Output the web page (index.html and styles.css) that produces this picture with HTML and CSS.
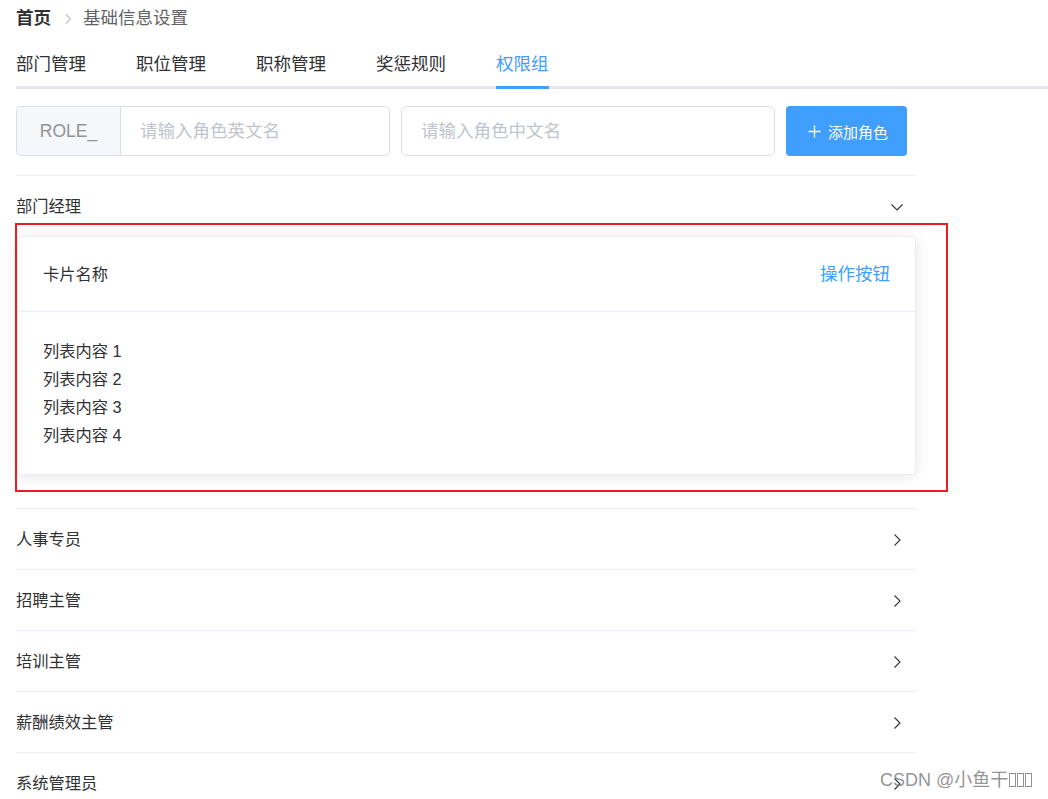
FILE: index.html
```html
<!DOCTYPE html>
<html lang="zh-CN">
<head>
<meta charset="utf-8">
<title>权限组</title>
<link rel="stylesheet" href="styles.css">
</head>
<body>
<div class="page">
  <div class="breadcrumb">
    <span class="crumb-home">首页</span>
    <svg class="crumb-sep" width="10" height="12" viewBox="0 0 10 12"><path d="M3 1.5 L7.5 6 L3 10.5" fill="none" stroke="#C0C4CC" stroke-width="1.3"/></svg>
    <span class="crumb-current">基础信息设置</span>
  </div>

  <div class="tabs">
    <div class="tab"><span class="tab-label">部门管理</span></div>
    <div class="tab"><span class="tab-label">职位管理</span></div>
    <div class="tab"><span class="tab-label">职称管理</span></div>
    <div class="tab"><span class="tab-label">奖惩规则</span></div>
    <div class="tab active"><span class="tab-label">权限组</span></div>
  </div>

  <div class="content">
    <div class="form-row">
      <div class="input-group">
        <div class="prepend">ROLE_</div>
        <input class="input inner" placeholder="请输入角色英文名">
      </div>
      <input class="input solo" placeholder="请输入角色中文名">
      <button class="btn-primary">
        <svg width="15" height="15" viewBox="0 0 15 15"><path d="M7.5 1.5 V13.5 M1.5 7.5 H13.5" stroke="#fff" stroke-width="1.3" fill="none"/></svg>
        <span>添加角色</span>
      </button>
    </div>

    <div class="collapse">
      <div class="c-item open">
        <div class="c-header">
          <span>部门经理</span>
          <svg class="arrow" width="14" height="14" viewBox="0 0 14 14"><path d="M1.5 4.5 L7 10 L12.5 4.5" fill="none" stroke="#303133" stroke-width="1.1"/></svg>
        </div>
        <div class="c-content">
          <div class="card">
            <div class="card-header">
              <span>卡片名称</span>
              <span class="text-btn">操作按钮</span>
            </div>
            <div class="card-body">
              <div class="item">列表内容 1</div>
              <div class="item">列表内容 2</div>
              <div class="item">列表内容 3</div>
              <div class="item">列表内容 4</div>
            </div>
          </div>
        </div>
      </div>
      <div class="c-item">
        <div class="c-header"><span>人事专员</span>
          <svg class="arrow" width="14" height="14" viewBox="0 0 14 14"><path d="M4.5 1.5 L10 7 L4.5 12.5" fill="none" stroke="#303133" stroke-width="1.1"/></svg></div>
      </div>
      <div class="c-item">
        <div class="c-header"><span>招聘主管</span>
          <svg class="arrow" width="14" height="14" viewBox="0 0 14 14"><path d="M4.5 1.5 L10 7 L4.5 12.5" fill="none" stroke="#303133" stroke-width="1.1"/></svg></div>
      </div>
      <div class="c-item">
        <div class="c-header"><span>培训主管</span>
          <svg class="arrow" width="14" height="14" viewBox="0 0 14 14"><path d="M4.5 1.5 L10 7 L4.5 12.5" fill="none" stroke="#303133" stroke-width="1.1"/></svg></div>
      </div>
      <div class="c-item">
        <div class="c-header"><span>薪酬绩效主管</span>
          <svg class="arrow" width="14" height="14" viewBox="0 0 14 14"><path d="M4.5 1.5 L10 7 L4.5 12.5" fill="none" stroke="#303133" stroke-width="1.1"/></svg></div>
      </div>
      <div class="c-item">
        <div class="c-header"><span>系统管理员</span>
          <svg class="arrow" width="14" height="14" viewBox="0 0 14 14"><path d="M4.5 1.5 L10 7 L4.5 12.5" fill="none" stroke="#303133" stroke-width="1.1"/></svg></div>
      </div>
    </div>
  </div>
</div>

<div class="annotation"></div>
<div class="watermark">CSDN @小鱼干<span class="tofu"></span><span class="tofu"></span><span class="tofu"></span></div>
</body>
</html>
```

FILE: styles.css
```css
* { box-sizing: border-box; }
html, body { margin: 0; padding: 0; background: #fff; }
body {
  font-family: "Liberation Sans", "Noto Sans CJK SC", sans-serif;
  color: #303133;
  width: 1048px;
  height: 799px;
  overflow: hidden;
  position: relative;
}
.page { padding-left: 16px; }

.breadcrumb {
  height: 37px;
  display: flex;
  align-items: center;
  font-size: 17.5px;
  line-height: 1;
}
.crumb-home { font-weight: 700; color: #303133; }
.crumb-sep { margin: 0 10px 0 12px; }
.crumb-current { color: #606266; }

.tabs {
  margin-top: 1px;
  height: 51px;
  display: flex;
  border-bottom: 3px solid #E4E7ED;
}
.tab {
  padding: 0 25px;
  font-size: 17.5px;
  line-height: 53px;
  color: #303133;
  height: 48px;
}
.tab:first-child { padding-left: 0; }
.tab:last-child { padding-right: 0; }
.tab-label {
  display: block;
  position: relative;
  height: 48px;
}
.tab.active { color: #409EFF; }
.tab.active .tab-label::after {
  content: "";
  position: absolute;
  left: 0; right: 0; bottom: -3px;
  height: 3px;
  background: #409EFF;
}

.content { width: 900px; }

.form-row {
  margin-top: 17px;
  display: flex;
  align-items: center;
  height: 50px;
}
.input-group {
  display: flex;
  width: 374px;
  height: 50px;
  margin-right: 11px;
}
.prepend {
  width: 104px;
  flex: none;
  background: #F5F7FA;
  border: 1px solid #DCDFE6;
  border-right: none;
  border-radius: 5px 0 0 5px;
  color: #909399;
  font-size: 17.5px;
  display: flex;
  align-items: center;
  justify-content: center;
}
.input {
  height: 50px;
  border: 1px solid #DCDFE6;
  border-radius: 5px;
  padding: 0 19px;
  font-size: 17.5px;
  font-family: inherit;
  color: #606266;
  outline: none;
  background: #fff;
}
.input::placeholder { color: #C0C4CC; }
.input.inner { flex: 1; min-width: 0; border-radius: 0 5px 5px 0; }
.input.solo { width: 374px; margin-right: 11px; }
.btn-primary {
  width: 121px;
  height: 50px;
  border: none;
  border-radius: 4px;
  background: #409EFF;
  color: #fff;
  font-family: inherit;
  font-size: 15px;
  display: flex;
  align-items: center;
  justify-content: center;
  gap: 6px;
  padding: 0 0 0 2px;
}

.collapse {
  margin-top: 19px;
  border-top: 1px solid #EBEEF5;
}
.c-item { border-bottom: 1px solid #EBEEF5; }
.c-header {
  height: 60px;
  display: flex;
  align-items: center;
  justify-content: space-between;
  font-size: 16.25px;
  font-weight: 400;
  color: #303133;
  padding-right: 12px;
  padding-bottom: 3px;
}
.arrow { margin-top: 4px; }
.c-content { padding-bottom: 33px; padding-left: 1px; }

.card {
  border: 1px solid #EBEEF5;
  border-radius: 5px;
  box-shadow: 0 2px 14px 0 rgba(0,0,0,0.1);
  background: #fff;
  font-size: 16.25px;
  color: #303133;
}
.card-header {
  height: 75px;
  padding: 0 25px 3px;
  display: flex;
  align-items: center;
  justify-content: space-between;
  border-bottom: 1px solid #EBEEF5;
}
.text-btn { color: #409EFF; font-size: 17.5px; }
.card-body { padding: 25px 25px 25px; }
.item { line-height: 28px; }

.annotation {
  position: absolute;
  left: 15px;
  top: 223px;
  width: 933px;
  height: 269px;
  border: 2px solid #E81E25;
  pointer-events: none;
}
.watermark {
  position: absolute;
  left: 880px;
  top: 769px;
  font-size: 18px;
  line-height: 22px;
  color: rgba(120,120,120,0.8);
  font-family: "Liberation Sans", "Noto Sans CJK SC", sans-serif;
  display: flex;
  align-items: center;
}
.tofu {
  display: inline-block;
  width: 7px;
  height: 14px;
  border: 1px solid rgba(120,120,120,0.8);
  margin-left: 1px;
}
```
